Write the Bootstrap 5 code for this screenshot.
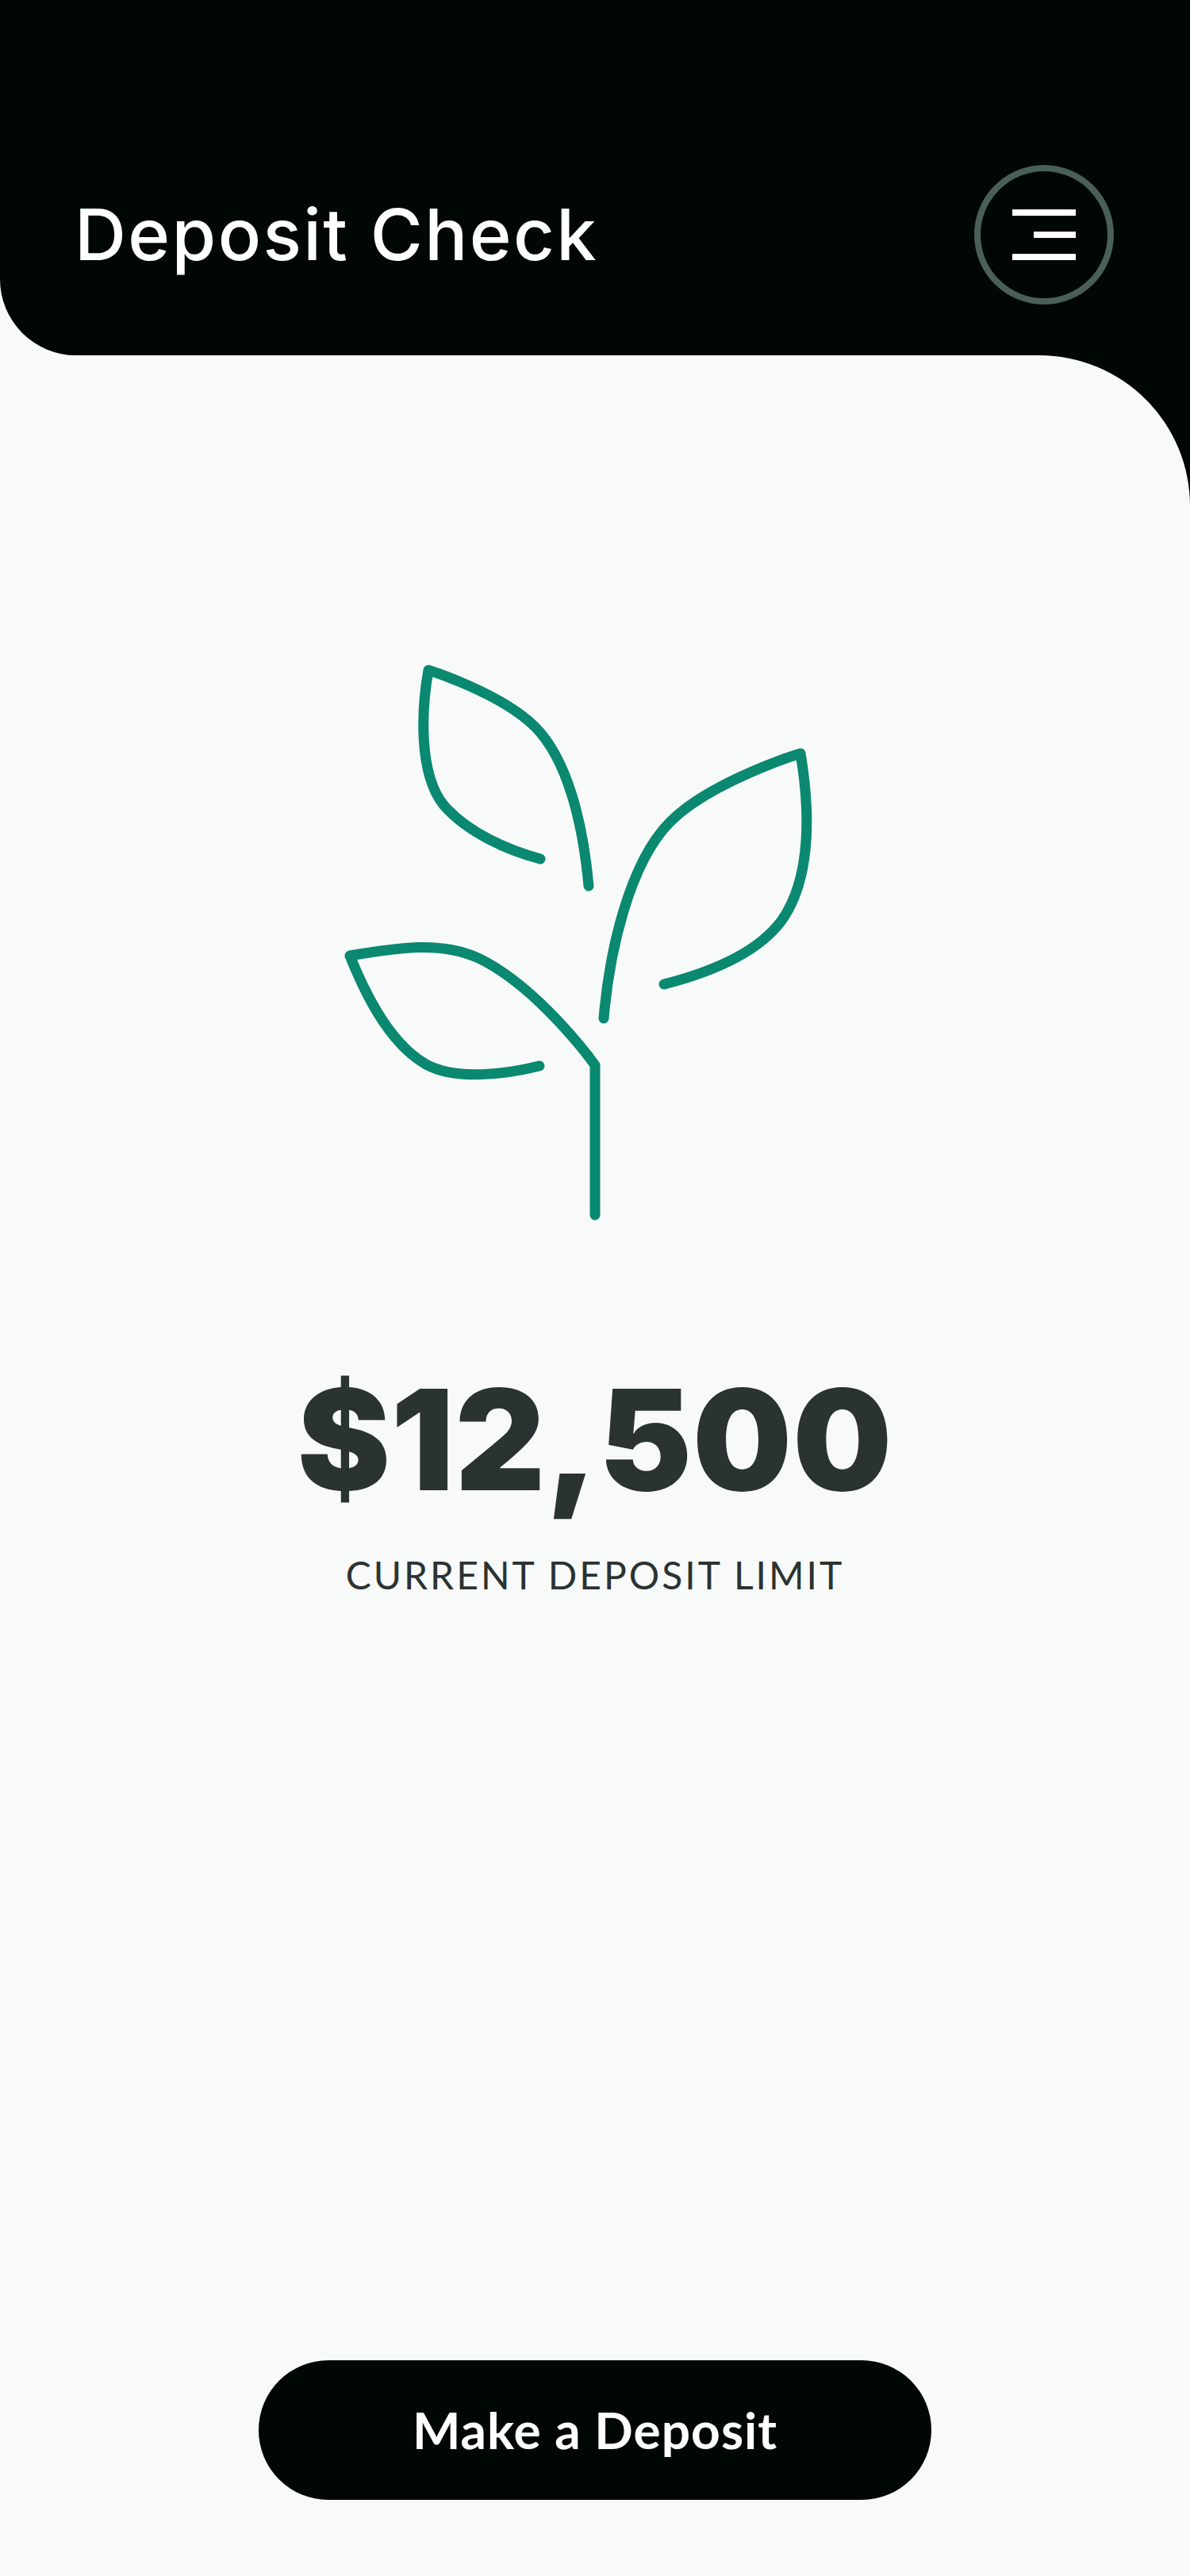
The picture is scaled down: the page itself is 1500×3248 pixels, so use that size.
<!DOCTYPE html>
<html lang="en">
<head>
    <meta charset="UTF-8">
    <meta name="viewport" content="width=device-width, initial-scale=1.0">
    <title>Deposit Check</title>
    <link href="https://cdn.jsdelivr.net/npm/bootstrap@5.3.0/dist/css/bootstrap.min.css" rel="stylesheet">
    <style>
        body {
            background-color: #f8faf9;
            font-family: "Lato", "Liberation Sans", sans-serif;
        }
        .screen-wrap {
            width: 1500px;
            height: 3248px;
        }
        .top-bar {
            height: 448px;
            padding: 208px 96px 64px;
            background-color: #000705;
            border-bottom-left-radius: 96px;
        }
        .page-title {
            font-family: "Inter", "Liberation Sans", sans-serif;
            font-size: 90px;
            font-weight: 500;
            line-height: 176px;
            letter-spacing: 2.4px;
            margin-left: -2px;
            color: #fff;
        }
        .menu-btn {
            width: 176px;
            height: 176px;
            padding: 0;
            background: transparent;
            border: 8px solid #4a5f58;
            border-radius: 50%;
        }
        .menu-btn svg {
            display: block;
        }
        .body-wrap {
            height: 2800px;
            background: linear-gradient(#000705, #000705) no-repeat top right / 190px 190px;
        }
        .body-panel {
            height: 100%;
            padding-top: 382px;
            padding-bottom: 96px;
            background-color: #f8faf9;
            border-top-right-radius: 190px;
        }
        .plant-art {
            display: block;
        }
        .limit-amount {
            margin-top: 165px;
            font-family: "Inter", "DejaVu Sans", sans-serif;
            font-size: 176px;
            font-weight: 900;
            line-height: 200px;
            letter-spacing: 1px;
            color: #2b3332;
        }
        .limit-label {
            margin-top: 42px;
            font-size: 48px;
            font-weight: 400;
            line-height: 58px;
            letter-spacing: 3px;
            color: #2b3332;
        }
        .deposit-btn {
            width: 848px;
            height: 176px;
            font-size: 64px;
            font-weight: 700;
            letter-spacing: 1px;
            color: #fff;
            background-color: #000705;
            border: 0;
            border-radius: 88px;
        }
    </style>
</head>
<body>
    <div class="screen-wrap d-flex flex-column">
        <header class="top-bar d-flex justify-content-between align-items-center">
            <h1 class="page-title mb-0">Deposit Check</h1>
            <button class="menu-btn d-flex align-items-center justify-content-center" type="button" aria-label="Menu">
                <svg width="80" height="64" viewBox="0 0 80 64" fill="#fff">
                    <rect x="0" y="0" width="80" height="8"/>
                    <rect x="27" y="28" width="53" height="8"/>
                    <rect x="0" y="56" width="80" height="8"/>
                </svg>
            </button>
        </header>
        <div class="body-wrap">
            <main class="body-panel d-flex flex-column align-items-center">
                <svg class="plant-art" width="640" height="720" viewBox="430 830 640 720" fill="none" stroke="#0a8870" stroke-width="13" stroke-linecap="round" stroke-linejoin="round">
                    <path d="M750 1532V1343C750 1343 680 1245 603 1208C555 1186 500 1195 441 1205C465 1265 495 1318 537 1342C575 1363 640 1354 680 1344"/>
                    <path d="M742 1117C735 1040 716 958 674 916C630 873 540 845 540 845C532 890 526 975 560 1016C590 1050 640 1072 681 1083"/>
                    <path d="M761 1284C768 1200 793 1089 844 1037C895 985 1009 950 1009 950C1020 1015 1025 1105 985 1161C950 1208 880 1230 837 1241"/>
                </svg>
                <div class="limit-amount">$12,500</div>
                <div class="limit-label">CURRENT DEPOSIT LIMIT</div>
                <button class="deposit-btn mt-auto" type="button">Make a Deposit</button>
            </main>
        </div>
    </div>
    <script src="https://cdn.jsdelivr.net/npm/bootstrap@5.3.0/dist/js/bootstrap.bundle.min.js"></script>
</body>
</html>
